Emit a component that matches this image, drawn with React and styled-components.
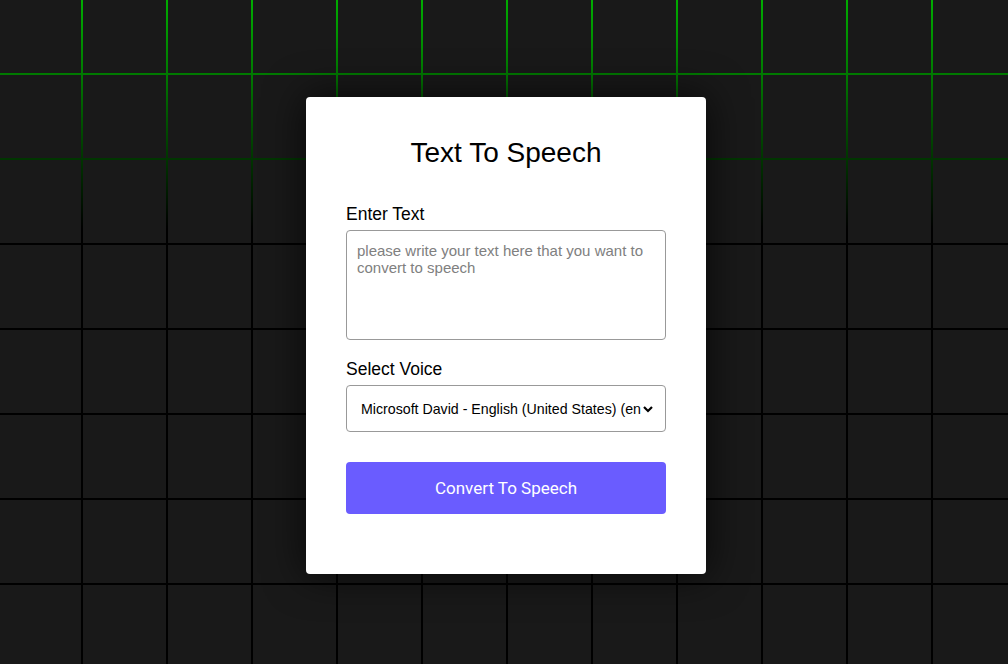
import styled, { createGlobalStyle } from "styled-components";

const GlobalStyle = createGlobalStyle`
  * {
    box-sizing: border-box;
  }
  body {
    margin: 0;
    font-family: "Liberation Sans", Arial, sans-serif;
    background: #191919;
  }
`;

const gridLines = (color) => `
  linear-gradient(to right, transparent 81px, ${color} 81px, ${color} 83px, transparent 83px),
  linear-gradient(to bottom, transparent 73px, ${color} 73px, ${color} 75px, transparent 75px)
`;

const Page = styled.div`
  position: relative;
  min-height: 100vh;
  display: flex;
  align-items: center;
  justify-content: center;
  padding: 7px 0 0 4px;
  background-color: #191919;
  background-image: ${gridLines("#000")};
  background-size: 85px 85px;
  overflow: hidden;

  &::before {
    content: "";
    position: absolute;
    inset: 0;
    background-image: ${gridLines("#00ad00")};
    background-size: 85px 85px;
    -webkit-mask-image: linear-gradient(to bottom, #000 0, rgba(0, 0, 0, 0.7) 74px, rgba(0, 0, 0, 0.3) 160px, transparent 228px);
    mask-image: linear-gradient(to bottom, #000 0, rgba(0, 0, 0, 0.7) 74px, rgba(0, 0, 0, 0.3) 160px, transparent 228px);
    pointer-events: none;
  }
`;

const Card = styled.div`
  position: relative;
  z-index: 1;
  width: 400px;
  padding: 40px 40px 60px;
  background: #fff;
  border-radius: 4px;
  box-shadow: 0 0 40px rgba(0, 0, 0, 0.75);
  display: flex;
  flex-direction: column;
`;

const Title = styled.h1`
  margin: 0 0 35px;
  font-size: 28px;
  font-weight: 400;
  line-height: 32px;
  text-align: center;
  color: #000;
`;

const Label = styled.label`
  display: block;
  font-size: 17.5px;
  line-height: 20px;
  color: #000;
  margin-bottom: ${(props) => props.gap || 6}px;
`;

const TextArea = styled.textarea`
  display: block;
  width: 100%;
  height: 110px;
  padding: 11px 10px;
  border: 1px solid #999;
  border-radius: 4px;
  font-family: "Liberation Sans", Arial, sans-serif;
  font-size: 15px;
  resize: none;
  outline: none;
  margin-bottom: 19px;

  &::placeholder {
    color: #808080;
  }
`;

const SelectWrap = styled.div`
  position: relative;
  margin-bottom: 30px;
`;

const Select = styled.select`
  display: block;
  width: 100%;
  height: 47px;
  padding: 0 24px 0 14px;
  border: 1px solid #999;
  border-radius: 4px;
  background: #fff;
  font-family: "Liberation Sans", Arial, sans-serif;
  font-size: 14.2px;
  color: #000;
  appearance: none;
  -webkit-appearance: none;
  outline: none;
`;

const Chevron = styled.svg`
  position: absolute;
  right: 13px;
  top: 20px;
  width: 10px;
  height: 8px;
  pointer-events: none;
`;

const Button = styled.button`
  height: 52px;
  border: none;
  border-radius: 4px;
  background: #6a5cff;
  color: #fff;
  font-family: Roboto, "Liberation Sans", sans-serif;
  font-size: 17px;
  cursor: pointer;
`;

export default function App() {
  return (
    <>
      <GlobalStyle />
      <Page>
        <Card>
          <Title>Text To Speech</Title>
          <Label htmlFor="text">Enter Text</Label>
          <TextArea
            id="text"
            placeholder="please write your text here that you want to convert to speech"
          />
          <Label htmlFor="voice">Select Voice</Label>
          <SelectWrap>
            <Select id="voice" defaultValue="david">
              <option value="david">
                Microsoft David - English (United States) (en-US)
              </option>
              <option value="zira">
                Microsoft Zira - English (United States) (en-US)
              </option>
            </Select>
            <Chevron viewBox="0 0 10 8">
              <path d="M1 2l4 4 4-4" fill="none" stroke="#000" strokeWidth="2.2" />
            </Chevron>
          </SelectWrap>
          <Button>Convert To Speech</Button>
        </Card>
      </Page>
    </>
  );
}
